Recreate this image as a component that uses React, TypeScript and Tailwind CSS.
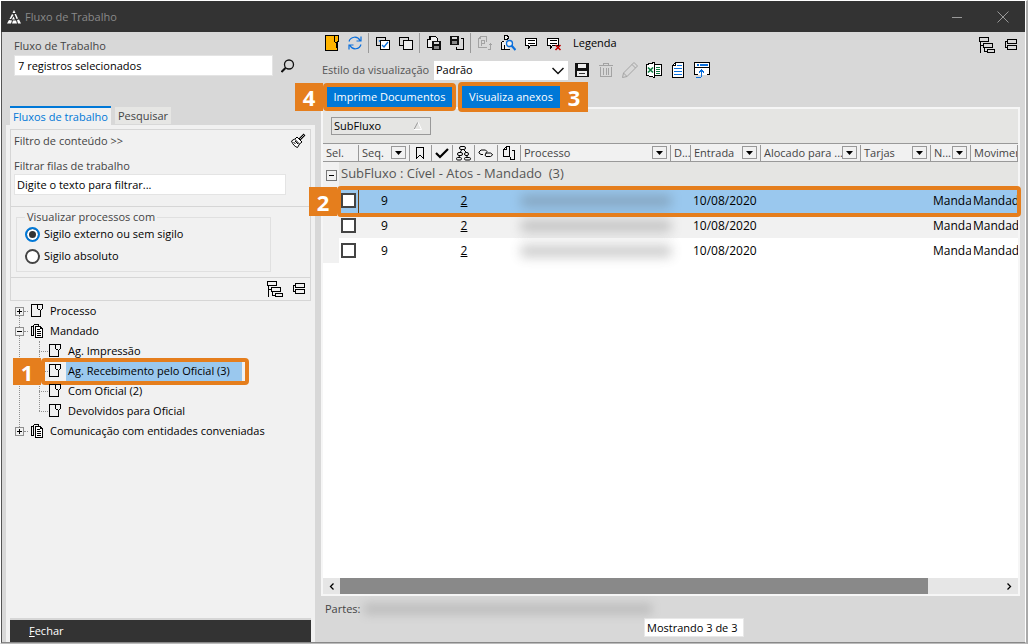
import React from 'react';
import type { ReactNode } from 'react';

interface IconProps {
  children: ReactNode;
  className?: string;
}

function Icon({ children, className = '' }: IconProps) {
  return (
    <svg width="16" height="16" viewBox="0 0 16 16" fill="none" stroke="#000" shapeRendering="crispEdges" className={`shrink-0 ${className}`} aria-hidden="true">
      {children}
    </svg>
  );
}

const NoteIcon = () => (
  <Icon>
    <path fill="#ffb400" d="M1.5.5h13v5l-1 1v9h-12z" />
    <path fill="#ffb400" d="M10.5.5v6l2 2 1-2h1v-6z" />
    <path d="M12.500 8.500v4" />
  </Icon>
);

const RefreshIcon = () => (
  <Icon>
    <g stroke="#0a6fdc" shapeRendering="auto" strokeWidth="1.2">
      <path d="M2 6.500C3.500 1.500 10.500.5 13 5.500M14 1.500v4.500h-4.500" />
      <path d="M14 9.500C12.500 14.500 5.500 15.500 3 10.500M2 14.500v-4.500h4.500" />
    </g>
  </Icon>
);

const CheckAllIcon = () => (
  <Icon>
    <path d="M4.500 10.500h-3v-8h9v3" />
    <path d="M5.500 5.500h9v9h-9z" fill="#fff" />
    <path d="M7 10l2 2 4-5M4 5.500l1 1" stroke="#0a6fdc" shapeRendering="auto" strokeWidth="1.3" />
  </Icon>
);

const UncheckAllIcon = () => (
  <Icon>
    <path d="M5.500 10.500h-4v-8h9v3" />
    <path d="M5.500 5.500h9v9h-9z" fill="#eee" />
  </Icon>
);

const Floppy = () => (
  <>
    <path d="M0 0h8l1 1v8h-9z" fill="#111" stroke="none" />
    <path d="M2 1h5v2h-5z" fill="#d8d8d8" stroke="none" />
    <path d="M2 5h5v3h-5z" fill="#888" stroke="none" />
  </>
);

const SaveDocIcon = () => (
  <Icon>
    <path d="M6.500 12.500h-5v-8h2v-3h6l2 2v3M4.500 1.500v3h-2" fill="#eee" />
    <g transform="translate(6 6)"><Floppy /></g>
  </Icon>
);

const LoadDocIcon = () => (
  <Icon>
    <g transform="translate(1 1)"><Floppy /></g>
    <path d="M11.500 3.500h3v11h-7v-3" />
  </Icon>
);

const PdfIcon = () => (
  <Icon>
    <g stroke="#a3a3a3">
      <path d="M9.500 12.500h-8v-9l2-2h6v5M3.500 1.500v2h-2" />
      <path d="M4.500 10.500v-5h3v3h-3M10.500 14.500h3v-6M11.500 10.500l2-2 2 2" />
    </g>
  </Icon>
);

const PersonSearchIcon = () => (
  <Icon>
    <path d="M5 .5h2l1 1v2l-1 1h-2l-1-1v-2zM4.500 5.500l-3 2v7h8M4.500 14v-4" fill="#eee" />
    <g stroke="#0a6fdc" shapeRendering="auto">
      <circle cx="9.500" cy="8.500" r="3" fill="#eee" strokeWidth="1.300" />
      <path d="M11.500 10.500l4 4.500" strokeWidth="2.200" />
    </g>
  </Icon>
);

const CommentIcon = () => (
  <Icon>
    <path d="M2.500 3.500h11v7h-6l-2 3v-3h-3z" fill="#fff" />
    <path d="M4.500 5.500h7M4.500 8.500h7" />
  </Icon>
);

const CommentRemoveIcon = () => (
  <Icon>
    <path d="M1.500 3.500h11v7h-6l-2 3v-3h-3z" fill="#fff" />
    <path d="M3.500 5.500h7M3.500 8.500h7" />
    <path d="M9.500 10l5 5M14.500 10l-5 5" stroke="#c00000" shapeRendering="auto" strokeWidth="1.600" />
  </Icon>
);

const SaveIcon = () => (
  <Icon>
    <path d="M1 1h14v14h-14z" fill="#111" stroke="none" />
    <path d="M4 2h8v4h-8zM3 9h10v5h-10z" fill="#ececec" stroke="none" />
    <path d="M5 11.500h6" stroke="#333" />
  </Icon>
);

const TrashIcon = () => (
  <Icon>
    <g stroke="#a3a3a3">
      <path d="M2.500 4.500v10h11v-10M1 3.500h14M5.500 3v-1.500h5v1.500M5.500 6v7M8 6v7M10.500 6v7" />
    </g>
  </Icon>
);

const PencilIcon = () => (
  <Icon>
    <path d="M.5 15.500l1-4.500 10.500-10.500 3.500 3.500-10.500 10.500zM1.500 11l3.500 3.500M10 2.500l3.500 3.500" stroke="#a3a3a3" shapeRendering="auto" />
  </Icon>
);

const ExcelIcon = () => (
  <Icon>
    <path d="M8.500 2.500h7v11h-7z" fill="#fff" />
    <path d="M.5 2.500l8-2v15l-8-2z" fill="#fff" />
    <path d="M2 5.500l5 5M7 5.500l-5 5" stroke="#107c41" strokeWidth="1.600" shapeRendering="auto" />
    <path d="M10 5.500h4M10 7.500h4M10 9.500h4M10 11.500h4" stroke="#107c41" />
  </Icon>
);

const ReportIcon = () => (
  <Icon>
    <path d="M5.500.5h8v15h-11v-12z" fill="#fff" />
    <path d="M5.500.5v3h-3" />
    <path d="M7 3.500h5M4 6.500h8M4 9.500h8M4 12.500h8" stroke="#0a6fdc" />
  </Icon>
);

const ExportIcon = () => (
  <Icon>
    <path d="M.5.5h15v12h-15z" fill="#fff" stroke="none" />
    <path d="M4 12.500h-3.500v-12h15v12h-3M.5 5.500h15" />
    <path d="M3 3h2M6 3h8" stroke="#0a6fdc" strokeWidth="2" />
    <path d="M1.500 15.500h5l1-1v-6M5 10.500l2.500-2.500 2.500 2.500" stroke="#0a6fdc" />
  </Icon>
);

const ExpandTreeIcon = () => (
  <Icon>
    <path d="M.5.5h9v4h-9zM4.500 6.500h9v4h-9zM8.500 12.500h7v3h-7zM1.500 4.500v11M1.500 8.500h3M5.500 10.500v4h3" />
  </Icon>
);

const CollapseTreeIcon = () => (
  <Icon>
    <path d="M4.500 2.500h9v4h-9zM4.500 8.500h9v4h-9zM4.500 4.500h-2v6h2" />
  </Icon>
);

const DocIcon = () => (
  <Icon className="mr-0.5">
    <path d="M10.500 13.500h-9v-12h11v4l-2 2v6M7.500 1.500v4l3 2" />
  </Icon>
);

const DocsIcon = () => (
  <Icon className="mr-0.5">
    <path d="M3.500 12.500h-2v-9h2M3.500 1.500h5v2M3.500 1.500v11" />
    <path d="M5.500 3.500h5l2 2v9h-7z" fill="#fff" />
    <path d="M7 6.500h3M7 8.500h4M7 10.500h4M7 12.500h4M10.500 3v2.500h2" />
  </Icon>
);

function ToolButton({ title, wide, children }: { title: string; wide?: boolean; children: ReactNode }) {
  return (
    <button type="button" aria-label={title} className={`flex h-[22px] shrink-0 items-center justify-center ${wide ? 'w-6' : 'w-[23px]'}`}>
      {children}
    </button>
  );
}

const Separator = () => <div className="mx-0.5 h-5 w-px shrink-0 bg-[#9a9a9a]" />;

function Badge({ children, className }: { children: ReactNode; className: string }) {
  return (
    <span className={`absolute flex w-7 items-center justify-center bg-[#e57e1d] text-[22px] leading-none font-bold text-white ${className}`}>
      {children}
    </span>
  );
}

const Frame = ({ className }: { className: string }) => (
  <span className={`pointer-events-none absolute rounded-[4px] border-4 border-[#e57e1d] ${className}`} />
);

function Toggle({ open }: { open?: boolean }) {
  return (
    <button type="button" aria-label={open ? 'Recolher' : 'Expandir'} className="relative z-10 flex size-[9px] shrink-0 bg-[#f1f1f1]">
      <svg width="9" height="9" viewBox="0 0 9 9" fill="none" shapeRendering="crispEdges">
        <path d="M.5.5h8v8h-8z" stroke="#8f8f8f" />
        <path d={open ? 'M2 4.5h5' : 'M2 4.5h5M4.500 2v5'} stroke="#000" />
      </svg>
    </button>
  );
}

const mandados = [
  { id: 1, label: 'Ag. Impressão' },
  { id: 2, label: 'Ag. Recebimento pelo Oficial (3)', selected: true },
  { id: 3, label: 'Com Oficial (2)' },
  { id: 4, label: 'Devolvidos para Oficial' },
];

function Tree() {
  return (
    <ul className="relative ml-[5px] leading-5 text-black">
      <span className="absolute top-3 left-1 h-[120px] border-l border-dotted border-[#8f8f8f]" />
      <li className="flex h-5 items-center">
        <Toggle />
        <span className="mr-0.5 w-1 border-t border-dotted border-[#8f8f8f]" />
        <DocIcon />
        <span className="ml-0.5">Processo</span>
      </li>
      <li>
        <div className="flex h-5 items-center">
          <Toggle open />
          <span className="mr-0.5 w-1 border-t border-dotted border-[#8f8f8f]" />
          <DocsIcon />
          <span className="ml-0.5">Mandado</span>
        </div>
        <ul className="relative ml-6">
          <span className="absolute top-0 left-0 h-[70px] border-l border-dotted border-[#8f8f8f]" />
          {mandados.map((item) => (
            <li key={item.id} className="relative flex h-5 items-center">
              <span className="w-[9px] border-t border-dotted border-[#8f8f8f]" />
              <DocIcon />
              <span className={item.selected ? 'w-[176px] bg-[#9ac8ee] px-0.5' : 'px-0.5'}>{item.label}</span>
              {item.selected && (
                <>
                  <Frame className="-top-[3px] left-0.5 h-[27px] w-[208px]" />
                  <Badge className="-top-[3px] right-full -mr-0.5 h-[27px]">1</Badge>
                </>
              )}
            </li>
          ))}
        </ul>
      </li>
      <li className="flex h-5 items-center">
        <Toggle />
        <span className="mr-0.5 w-1 border-t border-dotted border-[#8f8f8f]" />
        <DocsIcon />
        <span className="ml-0.5">Comunicação com entidades conveniadas</span>
      </li>
    </ul>
  );
}

function Sidebar() {
  return (
    <aside className="flex w-[313px] shrink-0 flex-col pl-1">
      <div className="flex h-[74px] flex-col pt-1 pl-2">
        <label htmlFor="fluxo" className="leading-[19px] text-[#444]">Fluxo de Trabalho</label>
        <div className="flex items-center gap-2">
          <input id="fluxo" defaultValue="7 registros selecionados" className="h-[21px] w-[259px] border border-[#e4e4e4] bg-white px-[3px] text-black" />
          <button type="button" aria-label="Pesquisar fluxo">
            <svg width="14" height="14" viewBox="0 0 14 14" fill="none" stroke="#111" strokeWidth="1.300">
              <circle cx="8" cy="5.500" r="4.500" />
              <path d="M4.500 9l-4 4" strokeWidth="2" />
            </svg>
          </button>
        </div>
      </div>
      <div className="flex items-end gap-1 pl-1">
        <button type="button" className="h-[19px] w-[101px] border-t-2 border-[#0078d7] bg-[#f1f1f1] leading-4 whitespace-nowrap text-[#0078d7]">Fluxos de trabalho</button>
        <button type="button" className="mb-px h-[17px] w-14 bg-[#e6e6e4] leading-4 text-[#444]">Pesquisar</button>
      </div>
      <div className="flex flex-1 flex-col bg-[#f1f1f1] px-1 pt-1">
        <div className="border border-[#d6d6d6]">
          <div className="h-[76px] pr-1 pl-[3px]">
            <div className="flex h-[22px] items-center justify-between">
              <span className="text-[#444]">Filtro de conteúdo &gt;&gt;</span>
              <button type="button" aria-label="Limpar filtro">
                <Icon>
                  <g shapeRendering="auto">
                    <path d="M1.500 8l3-2 5 5-2 3.500c-2-.5-5-3-6-6.500zM5 6l2-2 5 5-2.500 2M3.500 9l2 2M5 8l3 3" fill="#fff" />
                    <path d="M9.500 6.500l5-5" strokeWidth="2.500" />
                    <path d="M10 6l4-4" stroke="#fff" strokeWidth=".7" />
                  </g>
                </Icon>
              </button>
            </div>
            <label htmlFor="filtro" className="mt-1.5 block h-4 leading-4 text-[#444]">Filtrar filas de trabalho</label>
            <input id="filtro" defaultValue="Digite o texto para filtrar..." className="block h-[21px] w-[272px] border border-[#e4e4e4] bg-white px-0.5 text-black" />
          </div>
          <div className="h-[71px] border-t border-[#d6d6d6] px-[5px] pt-1">
            <fieldset className="h-[61px] w-[255px] border border-[#e0e0e0] px-2">
              <legend className="px-0.5 leading-3 text-[#444]">Visualizar processos com</legend>
              <label className="flex h-[22px] items-center gap-1 text-black">
                <input type="radio" name="sigilo" defaultChecked className="size-[15px] appearance-none rounded-full border-2 border-[#444] bg-white checked:border-[#0078d7] checked:bg-[#333] checked:shadow-[inset_0_0_0_2px_white]" />
                Sigilo externo ou sem sigilo
              </label>
              <label className="flex h-[22px] items-center gap-1 text-black">
                <input type="radio" name="sigilo" className="size-[15px] appearance-none rounded-full border-2 border-[#444] bg-white checked:border-[#0078d7] checked:bg-[#333] checked:shadow-[inset_0_0_0_2px_white]" />
                Sigilo absoluto
              </label>
            </fieldset>
          </div>
          <div className="flex h-[23px] items-center justify-end border-t border-[#d6d6d6]">
            <ToolButton wide title="Expandir tudo"><ExpandTreeIcon /></ToolButton>
            <ToolButton title="Recolher tudo"><CollapseTreeIcon /></ToolButton>
          </div>
        </div>
        <Tree />
        <div className="mt-auto border-t-2 border-[#d6d6d6]">
          <button type="button" className="block h-[22px] w-full bg-[#333] pl-[19px] text-left text-white">
            <u>F</u>echar
          </button>
        </div>
      </div>
    </aside>
  );
}

function FilterButton({ title }: { title: string }) {
  return (
    <button type="button" aria-label={`Filtrar ${title}`} className="mr-[3px] flex h-[13px] w-[15px] shrink-0 items-center justify-center border border-[#999]">
      <svg width="7" height="4" viewBox="0 0 7 4"><path d="M0 0h7l-3.500 4z" /></svg>
    </button>
  );
}

interface Column {
  title: string;
  width: string;
  filter?: boolean;
  icon?: ReactNode;
}

const columns: Column[] = [
  { title: 'Sel.', width: 'w-9' },
  { title: 'Seq.', width: 'w-[51px]', filter: true },
  { title: 'Marcador', width: 'w-[22px]', icon: <Icon><path d="M3.500 2.500h7v11l-3-3h-1l-3 3z" /></Icon> },
  { title: 'Conferido', width: 'w-[21px]', icon: <Icon><path d="M2 8l4 4 8-8" strokeWidth="2.200" shapeRendering="auto" /></Icon> },
  {
    title: 'Partes',
    width: 'w-[22px]',
    icon: (
      <Icon>
        <g shapeRendering="auto">
          <rect x="3.500" y="1.500" width="6" height="3" rx="1.500" />
          <rect x="1.500" y="7.500" width="5" height="3" rx="1.500" />
          <rect x="8.500" y="7.500" width="4" height="3" rx="1.500" />
          <rect x=".5" y="12.500" width="5" height="2.500" rx="1.200" />
          <rect x="8.500" y="12.500" width="6" height="2.500" rx="1.200" />
          <path d="M6 4.500l-2 3M7.500 4.500l3 3M3.500 10.500l-.5 2M11 10.500v2" />
        </g>
      </Icon>
    ),
  },
  {
    title: 'Vínculos',
    width: 'w-[23px]',
    icon: <Icon><path d="M5 9.500H3l-2-1.500v-1l2-2h4.500l1.500 1.500-1.500 2M8 11.500l-1-1.500 1.500-2h4l2 1.500v.5l-2 1.500z" shapeRendering="auto" /></Icon>,
  },
  { title: 'Documentos', width: 'w-[23px]', icon: <Icon><path d="M8.500 11.500h-6v-7l3-3h3v10M5.500 1.500v3h-3M9.500 14.500h4v-9h-3M9.500 12v2.500" /></Icon> },
  { title: 'Processo', width: 'w-[150px]', filter: true },
  { title: 'D...', width: 'w-5' },
  { title: 'Entrada', width: 'w-[70px]', filter: true },
  { title: 'Alocado para ...', width: 'w-[100px]', filter: true },
  { title: 'Tarjas', width: 'w-[70px]', filter: true },
  { title: 'N...', width: 'w-10', filter: true },
  { title: 'Movimentação', width: 'w-auto' },
];

const processos = [
  { id: 1, seq: 9, partes: 2, entrada: '10/08/2020', color: 'bg-[#9ac8ee]', cell: 'border-r border-[#6b3f10]' },
  { id: 2, seq: 9, partes: 2, entrada: '10/08/2020', color: 'bg-[#f1f1f1]', cell: '' },
  { id: 3, seq: 9, partes: 2, entrada: '10/08/2020', color: 'bg-white', cell: '' },
];

function ProcessGrid() {
  return (
    <section className="relative mr-[5px] ml-[6px] flex min-h-0 flex-1 flex-col border-2 border-[#f6f6f6] bg-white">
      <div className="flex h-[34px] shrink-0 items-center bg-[#e5e5e3] px-2">
        <button type="button" className="flex h-[18px] w-[100px] items-center justify-between border border-[#999] pr-2 pl-0.5 text-black">
          SubFluxo
          <svg width="8" height="8" viewBox="0 0 8 8" fill="none">
            <path d="M0 7.500L4 0" stroke="#999" />
            <path d="M4 0l3.500 7.500H0" stroke="#fff" />
          </svg>
        </button>
      </div>
      <div className="min-h-0 flex-1 overflow-hidden">
        <table className="w-full table-fixed border-collapse text-left">
          <thead>
            <tr className="h-[18px] bg-[#f1f1f1]">
              {columns.map((column) => (
                <th key={column.title} className={`border-y border-[#999] p-0 font-normal text-[#444] ${column.width}`}>
                  <div className="flex h-4 items-center border-r border-[#999]">
                    {column.icon ? (
                      <span className="flex w-full justify-center">{column.icon}</span>
                    ) : (
                      <span className="flex-1 overflow-hidden pl-[3px] leading-4 whitespace-nowrap">{column.title}</span>
                    )}
                    {column.filter && <FilterButton title={column.title} />}
                  </div>
                </th>
              ))}
            </tr>
          </thead>
          <tbody className="text-[12px]">
            <tr className="h-[26px] bg-[#e5e5e3]">
              <td colSpan={14} className="p-0 text-[13px] text-[#555]">
                <div className="flex h-[26px]">
                  <span className="flex w-4 items-center justify-center bg-[#f1f1f1]">
                    <button type="button" aria-label="Recolher grupo" className="flex size-[11px] items-center justify-center border border-[#777]">
                      <span className="h-px w-[5px] bg-black" />
                    </button>
                  </span>
                  <span className="pl-0.5 leading-[23px] whitespace-pre">SubFluxo : Cível - Atos - Mandado  (3)</span>
                </div>
              </td>
            </tr>
            {processos.map((processo) => (
              <tr key={processo.id} className={`h-[25px] text-black ${processo.color}`}>
                <td className="p-0">
                  <div className={`flex h-[25px] items-center ${processo.cell}`}>
                    <span className="h-full w-4 bg-[#f1f1f1]" />
                    <input type="checkbox" aria-label="Selecionar processo" className="ml-0.5 size-[15px] appearance-none border-2 border-[#444] bg-white" />
                  </div>
                </td>
                <td className="p-0 text-center">{processo.seq}</td>
                <td className="p-0" />
                <td className="p-0" />
                <td className="p-0 text-center underline">{processo.partes}</td>
                <td className="p-0" />
                <td className="p-0" />
                <td className="p-0">
                  <div className="h-3 bg-[#555] opacity-30 blur-[6px]" />
                </td>
                <td className="p-0" />
                <td className="p-0 pl-0.5">{processo.entrada}</td>
                <td className="p-0" />
                <td className="p-0" />
                <td className="p-0 pl-0.5">
                  <div className="overflow-hidden whitespace-nowrap">Mandado</div>
                </td>
                <td className="p-0 pl-0.5">
                  <div className="overflow-hidden whitespace-nowrap">Mandado</div>
                </td>
              </tr>
            ))}
          </tbody>
        </table>
      </div>
      <div className="flex h-4 shrink-0 bg-[#e6e6e6]">
        <button type="button" aria-label="Rolar para a esquerda" className="flex w-[17px] items-center justify-center">
          <svg width="5" height="7" viewBox="0 0 5 7" fill="none" stroke="#000" strokeWidth="1.300"><path d="M4.500.5l-3 3 3 3" /></svg>
        </button>
        <div className="flex-1">
          <div className="h-full w-[89%] bg-[#898989]" />
        </div>
        <button type="button" aria-label="Rolar para a direita" className="flex w-[17px] items-center justify-center">
          <svg width="5" height="7" viewBox="0 0 5 7" fill="none" stroke="#000" strokeWidth="1.300"><path d="M.5.5l3 3-3 3" /></svg>
        </button>
      </div>
      <Frame className="top-[77px] -right-[3px] left-3.5 h-[31px]" />
      <Badge className="top-[78px] -left-[14px] h-[29px]">2</Badge>
    </section>
  );
}

function Workspace() {
  return (
    <main className="flex min-w-0 flex-1 flex-col">
      <div className="flex h-[22px] items-center justify-between pr-0.5 pl-[5px]">
        <div className="flex items-center">
          <ToolButton title="Nota"><NoteIcon /></ToolButton>
          <ToolButton title="Atualizar"><RefreshIcon /></ToolButton>
          <Separator />
          <ToolButton title="Marcar todos"><CheckAllIcon /></ToolButton>
          <ToolButton title="Desmarcar todos"><UncheckAllIcon /></ToolButton>
          <Separator />
          <ToolButton title="Salvar documento"><SaveDocIcon /></ToolButton>
          <ToolButton title="Carregar documento"><LoadDocIcon /></ToolButton>
          <Separator />
          <ToolButton title="Gerar PDF"><PdfIcon /></ToolButton>
          <ToolButton title="Consultar pessoa"><PersonSearchIcon /></ToolButton>
          <ToolButton title="Comentar"><CommentIcon /></ToolButton>
          <ToolButton title="Remover comentário"><CommentRemoveIcon /></ToolButton>
          <button type="button" className="ml-2 text-black">Legenda</button>
        </div>
        <div className="mt-1 flex items-center">
          <ToolButton wide title="Expandir grupos"><ExpandTreeIcon /></ToolButton>
          <ToolButton wide title="Recolher grupos"><CollapseTreeIcon /></ToolButton>
        </div>
      </div>
      <div className="mt-[3px] flex h-[26px] items-center pl-[7px]">
        <label htmlFor="estilo" className="w-28 shrink-0 whitespace-nowrap text-[#555]">Estilo da visualização</label>
        <div className="relative mr-0.5">
          <select id="estilo" className="block h-[19px] w-[134px] appearance-none bg-white px-0.5 text-black">
            <option>Padrão</option>
          </select>
          <svg className="pointer-events-none absolute top-1.5 right-1" width="12" height="8" viewBox="0 0 12 8" fill="none" stroke="#111" strokeWidth="1.500">
            <path d="M.5 1L6 6.500 11.500 1" />
          </svg>
        </div>
        <ToolButton wide title="Salvar estilo"><SaveIcon /></ToolButton>
        <ToolButton wide title="Excluir estilo"><TrashIcon /></ToolButton>
        <ToolButton wide title="Editar estilo"><PencilIcon /></ToolButton>
        <ToolButton wide title="Exportar para Excel"><ExcelIcon /></ToolButton>
        <ToolButton wide title="Relatório"><ReportIcon /></ToolButton>
        <ToolButton wide title="Abrir em nova janela"><ExportIcon /></ToolButton>
      </div>
      <div className="relative z-10 flex h-6 items-center gap-2.5 pt-[3px] pl-3">
        <div className="relative">
          <button type="button" className="block h-5 w-[125px] bg-[#0078d7] text-white">Imprime Documentos</button>
          <Frame className="-inset-1" />
          <Badge className="-inset-y-1 right-full mr-1">4</Badge>
        </div>
        <div className="relative">
          <button type="button" className="block h-[22px] w-[98px] bg-[#0078d7] text-white">Visualiza anexos</button>
          <Frame className="-inset-1" />
          <Badge className="-inset-y-1 left-full">3</Badge>
        </div>
      </div>
      <ProcessGrid />
      <footer className="flex h-[46px] shrink-0 flex-col pl-2.5">
        <div className="flex h-[22px] items-center pt-1 text-[#444]">
          Partes:
          <span className="ml-1 h-3 w-72 bg-[#777] opacity-25 blur-[5px]" />
        </div>
        <output className="mr-[7px] ml-[319px] flex h-[19px] w-[100px] items-center border border-[#e8e8e8] bg-white px-0.5 whitespace-nowrap text-black">
          Mostrando 3 de 3
        </output>
      </footer>
    </main>
  );
}

export default function App() {
  return (
    <div className="flex h-screen flex-col border border-r-2 border-t-white border-r-[#aaa] border-b-[#bbb] border-l-white bg-[#d8d8d8] font-['Open_Sans',sans-serif] text-[11px] leading-4">
      <header className="flex h-[31px] shrink-0 items-center justify-between border-r border-white bg-[#333] pr-4 pl-1.5">
        <div className="flex items-center gap-1 text-[#8a8a8a]">
          <svg width="14" height="14" viewBox="0 0 14 14" fill="#fff">
            <path d="M7 0l1.500 3h-3zM5 4l1.500 1L4 9H2.500zM7.500 4H9l2 4.500-1.500.5zM6.500 6.500L8 9.500H5zM2 10l3 .5-1 3H0zM6 10.500h3l1 3H5zM10 10l2-.5 2 4h-3z" />
          </svg>
          Fluxo de Trabalho
        </div>
        <div className="flex items-center gap-[34px]">
          <button type="button" aria-label="Minimizar">
            <svg width="12" height="12" viewBox="0 0 12 12" stroke="#999" shapeRendering="crispEdges"><path d="M1 6.500h10" /></svg>
          </button>
          <button type="button" aria-label="Fechar janela">
            <svg width="12" height="12" viewBox="0 0 12 12" stroke="#999"><path d="M.5.500l11 11M11.500.5l-11 11" /></svg>
          </button>
        </div>
      </header>
      <div className="flex min-h-0 flex-1 border-r border-b border-l border-r-white border-b-[#888] border-l-[#555]">
        <Sidebar />
        <Workspace />
      </div>
    </div>
  );
}
